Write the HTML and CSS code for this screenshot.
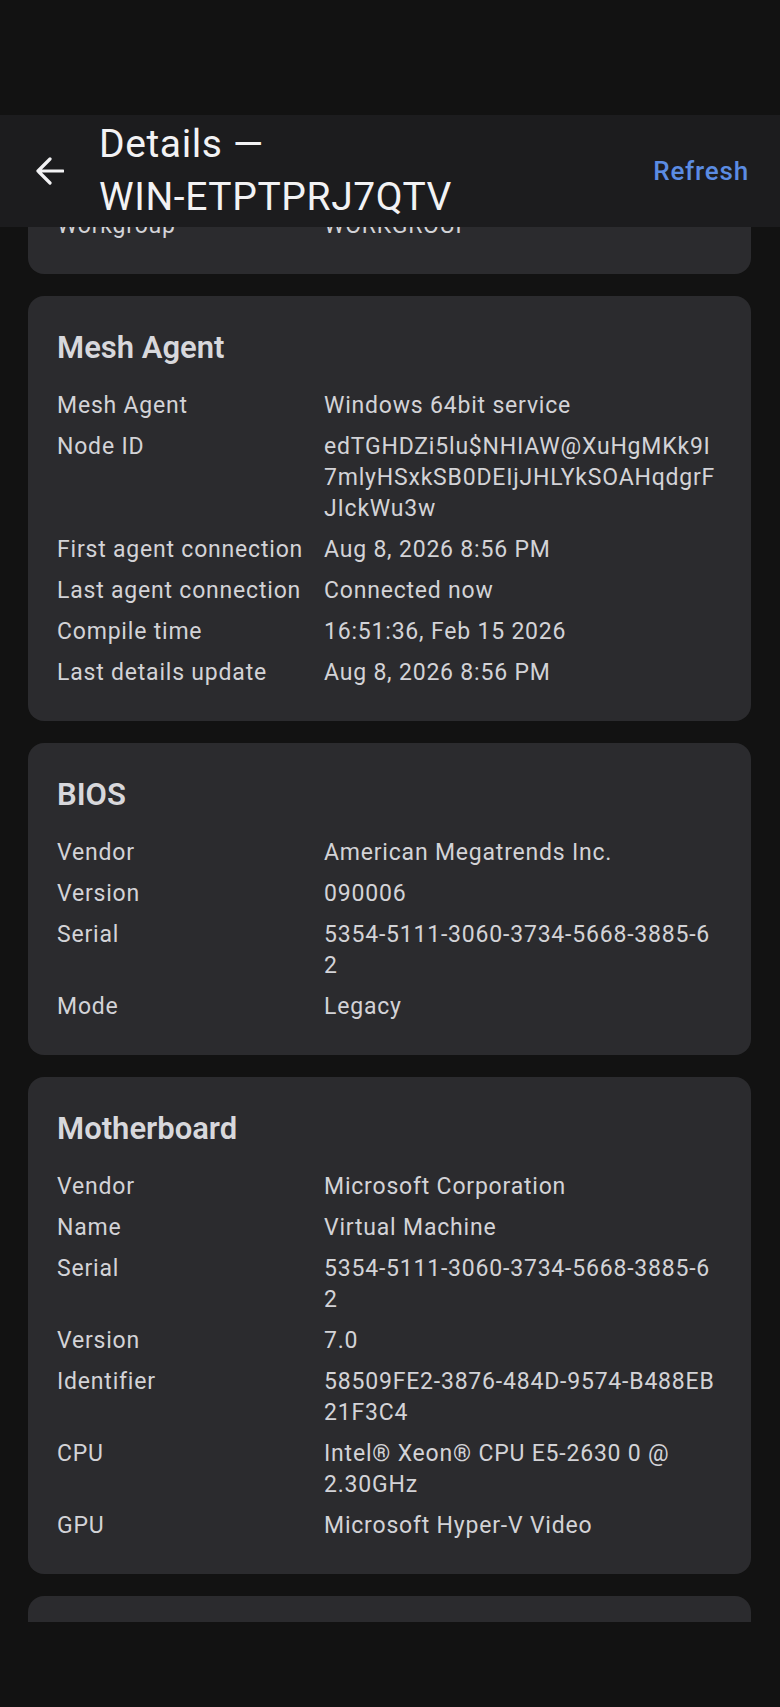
FILE: index.html
```html
<!DOCTYPE html>
<html lang="en">
<head>
    <meta charset="UTF-8">
    <meta name="viewport" content="width=device-width, initial-scale=1.0">
    <title>Details — WIN-ETPTPRJ7QTV</title>
    <link rel="stylesheet" href="styles.css">
</head>
<body>
    <div class="screen">
        <div class="status-space"></div>

        <header class="app-bar">
            <button class="back-btn" aria-label="Back">
                <svg viewBox="0 0 28 28" width="28" height="28">
                    <path d="M27 14H2M14 2L2 14l12 12" fill="none" stroke="#f2f2f4" stroke-width="3.2" stroke-linecap="round" stroke-linejoin="round"/>
                </svg>
            </button>
            <h1 class="app-title">Details —<br>WIN-ETPTPRJ7QTV</h1>
            <button class="refresh-btn">Refresh</button>
        </header>

        <main class="content">
            <div class="cards">
                <!-- first card is scrolled mostly out of view -->
                <section class="card card-scrolled">
                    <div class="row">
                        <span class="label">Workgroup</span>
                        <span class="value">WORKGROUP</span>
                    </div>
                </section>

                <section class="card">
                    <h2 class="card-title">Mesh Agent</h2>
                    <div class="row">
                        <span class="label">Mesh Agent</span>
                        <span class="value">Windows 64bit service</span>
                    </div>
                    <div class="row">
                        <span class="label">Node ID</span>
                        <span class="value break">edTGHDZi5lu$NHIAW@XuHgMKk9I7mlyHSxkSB0DEIjJHLYkSOAHqdgrFJIckWu3w</span>
                    </div>
                    <div class="row">
                        <span class="label">First agent connection</span>
                        <span class="value">Aug 8, 2026 8:56 PM</span>
                    </div>
                    <div class="row">
                        <span class="label">Last agent connection</span>
                        <span class="value">Connected now</span>
                    </div>
                    <div class="row">
                        <span class="label">Compile time</span>
                        <span class="value">16:51:36, Feb 15 2026</span>
                    </div>
                    <div class="row">
                        <span class="label">Last details update</span>
                        <span class="value">Aug 8, 2026 8:56 PM</span>
                    </div>
                </section>

                <section class="card">
                    <h2 class="card-title">BIOS</h2>
                    <div class="row">
                        <span class="label">Vendor</span>
                        <span class="value">American Megatrends Inc.</span>
                    </div>
                    <div class="row">
                        <span class="label">Version</span>
                        <span class="value">090006</span>
                    </div>
                    <div class="row">
                        <span class="label">Serial</span>
                        <span class="value break">5354-5111-3060-3734-5668-3885-62</span>
                    </div>
                    <div class="row">
                        <span class="label">Mode</span>
                        <span class="value">Legacy</span>
                    </div>
                </section>

                <section class="card">
                    <h2 class="card-title">Motherboard</h2>
                    <div class="row">
                        <span class="label">Vendor</span>
                        <span class="value">Microsoft Corporation</span>
                    </div>
                    <div class="row">
                        <span class="label">Name</span>
                        <span class="value">Virtual Machine</span>
                    </div>
                    <div class="row">
                        <span class="label">Serial</span>
                        <span class="value break">5354-5111-3060-3734-5668-3885-62</span>
                    </div>
                    <div class="row">
                        <span class="label">Version</span>
                        <span class="value">7.0</span>
                    </div>
                    <div class="row">
                        <span class="label">Identifier</span>
                        <span class="value break">58509FE2-3876-484D-9574-B488EB21F3C4</span>
                    </div>
                    <div class="row">
                        <span class="label">CPU</span>
                        <span class="value">Intel® Xeon® CPU E5-2630 0 @ 2.30GHz</span>
                    </div>
                    <div class="row">
                        <span class="label">GPU</span>
                        <span class="value">Microsoft Hyper-V Video</span>
                    </div>
                </section>

                <section class="card">
                    <h2 class="card-title">&nbsp;</h2>
                </section>
            </div>
        </main>
    </div>
</body>
</html>
```

FILE: styles.css
```css
:root {
    --page-bg: #121212;
    --bar-bg: #1c1c1e;
    --card-bg: #2b2b2e;
    --title-color: #d8d8dc;
    --text-color: #d3d3d7;
    --accent: #5b8ce3;
}

* {
    box-sizing: border-box;
    margin: 0;
    padding: 0;
}

body {
    font-family: Roboto, 'Noto Sans', sans-serif;
    background-color: var(--page-bg);
    color: var(--text-color);
}

.screen {
    width: 780px;
    height: 1707px;
    display: flex;
    flex-direction: column;
    overflow: hidden;
}

.status-space {
    height: 115px;
    flex-shrink: 0;
}

.app-bar {
    height: 112px;
    flex-shrink: 0;
    display: flex;
    align-items: center;
    background-color: var(--bar-bg);
    padding: 0 31px 0 22px;
    position: relative;
    z-index: 2;
}

.back-btn {
    width: 56px;
    height: 56px;
    display: flex;
    align-items: center;
    justify-content: center;
    background: none;
    border: none;
}

.app-title {
    flex: 1;
    margin-left: 21px;
    font-size: 39px;
    font-weight: 400;
    line-height: 53px;
    letter-spacing: 0.6px;
    color: #f2f2f4;
}

.refresh-btn {
    background: none;
    border: none;
    font-family: inherit;
    font-size: 26px;
    font-weight: 500;
    letter-spacing: 0.8px;
    color: var(--accent);
}

.content {
    height: 1395px;
    flex-shrink: 0;
    overflow: hidden;
    padding: 0 29px 0 28px;
}

.cards {
    display: flex;
    flex-direction: column;
    gap: 22px;
}

.card {
    background-color: var(--card-bg);
    border-radius: 16px;
    padding: 28px 31px 28px 29px;
}

/* scrolled list: top card is partly hidden under the app bar */
.card-scrolled {
    margin-top: -50px;
}

.card-title {
    font-size: 31px;
    font-weight: 600;
    line-height: 38px;
    margin: 5px 0 18px;
    color: var(--title-color);
}

.row {
    display: grid;
    grid-template-columns: 267px 1fr;
    padding: 5px 0;
    font-size: 23px;
    line-height: 31px;
    letter-spacing: 0.8px;
}

.value {
    overflow-wrap: anywhere;
}

.value.break {
    word-break: break-all;
}
```
